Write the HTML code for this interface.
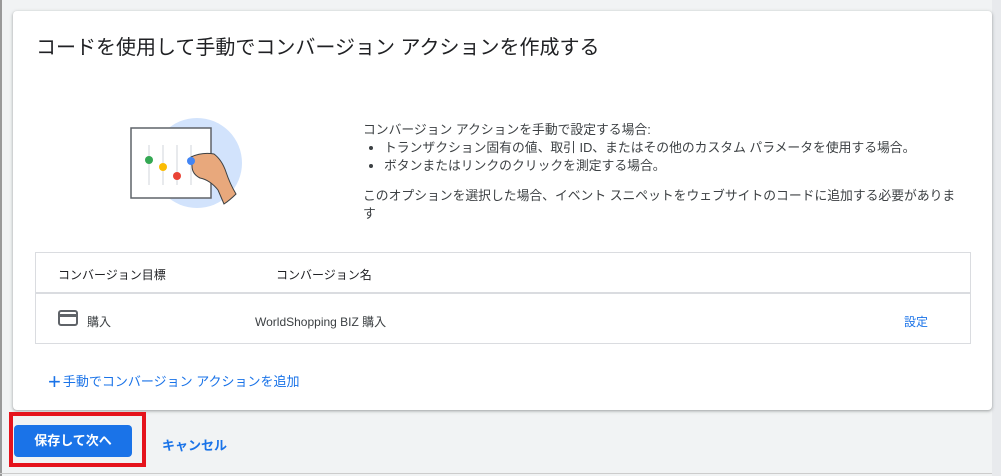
<!DOCTYPE html>
<html><head><meta charset="utf-8"><style>
*{margin:0;padding:0;box-sizing:border-box}
body{width:1001px;height:476px;background:#f1f3f4;font-family:"Liberation Sans","Noto Sans CJK JP",sans-serif;color:#3c4043;position:relative;overflow:hidden}
.card{position:absolute;left:13px;top:11px;width:979px;height:399px;background:#fff;border-radius:4px;box-shadow:0 1px 2px rgba(60,64,67,.3),0 1px 3px 1px rgba(60,64,67,.15)}
.title{position:absolute;left:36px;top:31px;font-size:20px;color:#202124}
.desc{position:absolute;left:363px;top:121px;font-size:12.8px;line-height:18px;width:620px;white-space:nowrap;color:#3c4043}
.desc ul{margin-left:21px}
.tbl{position:absolute;left:35px;top:252px;width:936px;height:92px;border:1px solid #dadce0}
.hdr{height:41px;border-bottom:2px solid #dadce0;font-size:12px;color:#202124;position:relative}
.t{position:absolute;font-size:12px}
.add{position:absolute;left:48px;top:369px;color:#1a73e8;font-size:13px}
.btn{position:absolute;left:14px;top:425px;width:118px;height:32px;background:#1a73e8;border-radius:4px;color:#fff;font-size:13px;font-weight:bold;text-align:center;line-height:32px}
.red{position:absolute;left:9px;top:412px;width:137px;height:55px;border:4px solid #e5131c}
.cancel{position:absolute;left:162px;top:435px;color:#1a73e8;font-size:13px;font-weight:bold}
</style></head><body>
<div style="position:absolute;left:0;top:0;width:2px;height:476px;background:#999"></div>
<div style="position:absolute;left:0;top:473px;width:1001px;height:1px;background:#ccc"></div>
<div style="position:absolute;left:992px;top:0;width:9px;height:476px;background:#e8eaed"></div>
<div class="card"></div>
<div class="title">コードを使用して手動でコンバージョン アクションを作成する</div>
<svg style="position:absolute;left:120px;top:110px" width="130" height="110" viewBox="0 0 130 110">
<circle cx="77" cy="53" r="45" fill="#d2e3fc"/>
<rect x="11" y="18" width="80" height="70" fill="#fff" stroke="#5f6368" stroke-width="1.5"/>
<g stroke="#e8eaed" stroke-width="2"><line x1="29" y1="35" x2="29" y2="75"/><line x1="43" y1="35" x2="43" y2="75"/><line x1="57" y1="35" x2="57" y2="75"/><line x1="71" y1="35" x2="71" y2="75"/></g>
<circle cx="29" cy="50" r="4" fill="#34a853"/><circle cx="43" cy="57" r="4" fill="#fbbc04"/><circle cx="57" cy="66" r="4" fill="#ea4335"/>
<path d="M71 47 Q82 42 94 44 Q102 50 106 62 Q110 74 116 84 Q110 90 104 94 L98 80 Q90 70 80 68 Q72 64 72 56 Z" fill="#e8a87c" stroke="#3c4043" stroke-width="1"/>
<circle cx="71" cy="51" r="4" fill="#4285f4"/>
</svg>
<div class="desc">コンバージョン アクションを手動で設定する場合:<ul><li>トランザクション固有の値、取引 ID、またはその他のカスタム パラメータを使用する場合。</li><li>ボタンまたはリンクのクリックを測定する場合。</li></ul><div style="height:12px"></div>このオプションを選択した場合、イベント スニペットをウェブサイトのコードに追加する必要がありま<br>す</div>
<div class="tbl"><div class="hdr"><span class="t" style="left:22px;top:13px">コンバージョン目標</span><span class="t" style="left:240px;top:13px">コンバージョン名</span></div>
<svg style="position:absolute;left:22px;top:57px" width="20" height="16" viewBox="0 0 20 16"><rect x="1" y="1" width="18" height="14" rx="2" fill="none" stroke="#5f6368" stroke-width="2"/><rect x="1" y="4" width="18" height="3" fill="#5f6368"/></svg>
<span class="t" style="left:51px;top:60px">購入</span><span class="t" style="left:219px;top:60px">WorldShopping BIZ 購入</span><span class="t" style="left:868px;top:60px;color:#1a73e8">設定</span></div>
<div class="add"><span style="font-size:22px;vertical-align:-3px;margin-right:2px">+</span>手動でコンバージョン アクションを追加</div>
<div class="btn">保存して次へ</div>
<div class="red"></div>
<div class="cancel">キャンセル</div>
</body></html>
